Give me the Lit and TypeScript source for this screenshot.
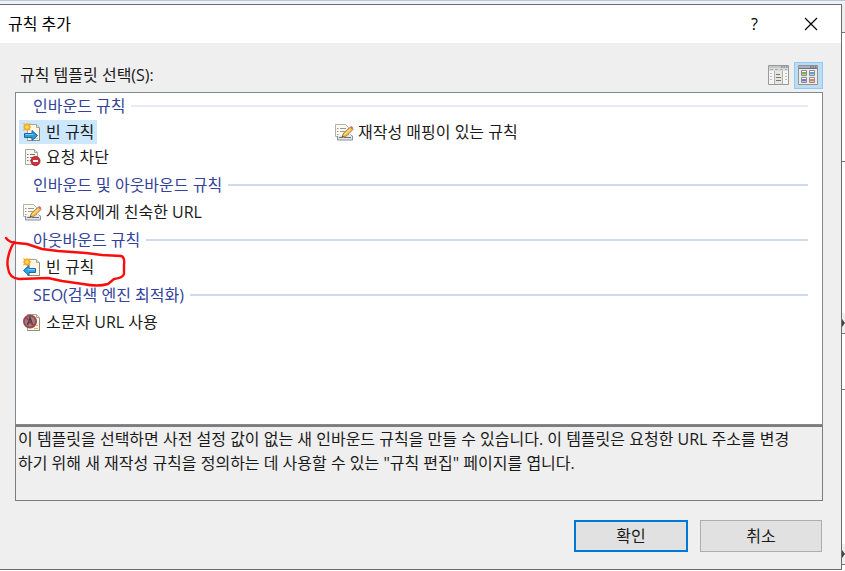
import { LitElement, html, css, svg, nothing } from "lit";
import { customElement, property, state } from "lit/decorators.js";
import { classMap } from "lit/directives/class-map.js";

type IconName = "inbound" | "block" | "rewrite" | "outbound" | "lowercase";

interface Template {
  id: string;
  label: string;
  icon: IconName;
  circled?: boolean;
}

interface Group {
  title: string;
  items: Template[];
}

const GROUPS: Group[] = [
  {
    title: "인바운드 규칙",
    items: [
      { id: "in-blank", label: "빈 규칙", icon: "inbound" },
      { id: "in-map", label: "재작성 매핑이 있는 규칙", icon: "rewrite" },
      { id: "in-block", label: "요청 차단", icon: "block" },
    ],
  },
  {
    title: "인바운드 및 아웃바운드 규칙",
    items: [{ id: "friendly", label: "사용자에게 친숙한 URL", icon: "rewrite" }],
  },
  {
    title: "아웃바운드 규칙",
    items: [{ id: "out-blank", label: "빈 규칙", icon: "outbound", circled: true }],
  },
  {
    title: "SEO(검색 엔진 최적화)",
    items: [{ id: "lower", label: "소문자 URL 사용", icon: "lowercase" }],
  },
];

const page = svg`
  <path d="M4.5 1.5h9l3 3v13h-12z" fill="#fbf8e6" stroke="#aaa594"/>
  <path d="M13.5 1.5v3h3" fill="#e8e3c8" stroke="#aaa594"/>
  <path d="M16.5 5v12.500h-12" fill="none" stroke="#8f8d84"/>`;

const star = svg`
  <path d="M0 0l2.500 1L4 0l1.200 1L7.500 0 7 2.500 8 4 7 5.200 7.500 7.500 5 7 4 8 3 7 0 7.500 1 5 0 4 1 2.500z" fill="#f7a928"/>
  <circle cx="4" cy="4" r="1.800" fill="#ffd765"/>`;

const ICONS = {
  inbound: svg`${page}
    <path d="M7 15.500h8" stroke="#c9c6b6"/>
    ${star}
    <path d="M1.500 10.500h7.500v-3l5.500 5-5.500 5v-3h-7.500z" fill="#2a9be0" stroke="#1769a6"/>
    <path d="M2.500 11.500h7.500" stroke="#7fcdf5"/>`,
  outbound: svg`${page}${star}
    <path d="M12.500 10.500h-6.500v-3l-5.500 5 5.500 5v-3h6.500z" fill="#2fa5e8" stroke="#1769a6"/>
    <path d="M5 11.500h7" stroke="#8ad4f8"/>`,
  block: svg`
    <path d="M2.500 1.500h9l3 3v12h-12z" fill="#f8f7f2" stroke="#a5a5a0"/>
    <path d="M11.500 1.500v3h3" fill="#deded8" stroke="#a5a5a0"/>
    <path d="M4 6.500h1.500M7 6.500h5M4 9.500h1.500M7 9.500h4M4 12.500h1.500M7 12.500h2" stroke="#777"/>
    <circle cx="12.500" cy="13" r="4.500" fill="#d5323c" stroke="#a32028"/>
    <path d="M10 13h5" stroke="#fff" stroke-width="2"/>`,
  rewrite: svg`
    <path d="M.5 1.500h10l3 3v9h-13z" fill="#fbfaf0" stroke="#b3b0a5"/>
    <path d="M2 5.500h1.500M5 5.500h6M2 8.500h1.500M5 8.500h5M2 11.500h1.500" stroke="#999"/>
    <path d="M2.500 13v4h15v-4l-2-1.500" fill="#e2e5e9" stroke="#8a929e"/>
    <path d="M4 14.500h3M9 14.500h7" stroke="#6a727e"/>
    <path d="M7 14.500l1.500-4.500 7-6 2.500 2.500-6.500 6.500z" fill="#f5be4b" stroke="#96702c" stroke-width=".8"/>
    <path d="M9.500 11.500l6-5.500" stroke="#fff0b8"/>
    <path d="M15 4.300l1.500-1.300 2 2-1.300 1.600z" fill="#dd6a6a"/>
    <path d="M7 14.500l.6-2 1.200 1.200z" fill="#333"/>`,
  lowercase: svg`${page}
    <path d="M11 15.500h4M13 12.500h2" stroke="#d9b86a"/>
    <circle cx="7" cy="8.500" r="6" fill="#9a8287" stroke="#a0484c" stroke-width="2"/>
    <path d="M4.500 12l2.500-7.500 2.500 7.500M5.500 9.500h3" fill="none" stroke="#443e49" stroke-width="1.500"/>
    <path d="M3 4.500l8 8" stroke="#a8383d" stroke-width="1.500"/>`,
};

@customElement("rule-item")
export class RuleItem extends LitElement {
  @property({ attribute: false }) item!: Template;
  @property({ type: Boolean }) selected = false;

  static styles = css`
    :host {
      display: block;
      position: relative;
    }
    .item {
      display: inline-flex;
      align-items: center;
      gap: 4px;
      height: 24px;
      padding: 0 3px 0 4px;
      border: 0;
      background: none;
      color: #1a1a1a;
      font: inherit;
      white-space: nowrap;
    }
    .item.selected {
      background: #cce8ff;
    }
    .icon {
      flex: none;
      width: 19px;
      height: 19px;
    }
    .mark {
      position: absolute;
      left: -16px;
      top: -19px;
      width: 124px;
      height: 52px;
      pointer-events: none;
    }
  `;

  render() {
    return html`
      <button
        class=${classMap({ item: true, selected: this.selected })}
        type="button"
        aria-pressed=${this.selected}
      >
        <svg class="icon" viewBox="0 0 19 19" aria-hidden="true">${ICONS[this.item.icon]}</svg>
        <span>${this.item.label}</span>
      </button>
      ${this.item.circled
        ? html`<svg class="mark" viewBox="0 0 124 52" aria-hidden="true">
            <path
              d="M3 2C6 6 9 7 14 7L24 8 39 13 55 15 83 17 99 19 118 20Q122 21 121 29L121 38Q120 42 111 43L105 48Q95 51 80 48L59 45 45 42 16 43Q6 42 5 32Q3 24 8 12L11 6"
              fill="none" stroke="#fb0d0d" stroke-width="2.400" stroke-linecap="round" stroke-linejoin="round"
            />
          </svg>`
        : nothing}
    `;
  }
}

@customElement("app-root")
export class AppRoot extends LitElement {
  @state() private selected = "in-blank";

  static styles = css`
    :host {
      display: flex;
      flex-direction: column;
      min-height: 100vh;
      box-sizing: border-box;
      padding-bottom: 1px;
      background: #fff;
      color: #1a1a1a;
      font: 16px/24px "Open Sans", "Noto Sans CJK KR", sans-serif;
    }
    .strip {
      height: 1px;
      background: #b9c7d6;
      border-bottom: 3px solid #eef3f8;
    }
    .main {
      flex: 1;
      display: flex;
    }
    .dialog {
      flex: 1;
      display: flex;
      flex-direction: column;
      border: 1px solid #6b6b6b;
      border-left: 0;
      background: #efefef;
    }
    .titlebar {
      display: flex;
      align-items: center;
      gap: 5px;
      height: 38px;
      padding: 0 8px;
      background: #fff;
      color: #000;
    }
    h1 {
      flex: 1;
      margin: 0;
      font-size: 16px;
      font-weight: 400;
    }
    .caption {
      display: grid;
      place-items: center;
      width: 57px;
      height: 38px;
      padding: 0;
      border: 0;
      background: none;
      color: #000;
      font: inherit;
    }
    .caption:last-child {
      width: 45px;
    }
    .content {
      flex: 1;
      display: flex;
      flex-direction: column;
      padding: 18px 18px 17px 15px;
    }
    .toolbar {
      display: flex;
      align-items: center;
      gap: 1px;
      height: 28px;
      padding: 0 0 3px 5px;
    }
    .label {
      flex: 1;
    }
    .view {
      display: grid;
      place-items: center;
      width: 29px;
      height: 27px;
      padding: 0;
      border: 1px solid transparent;
      background: none;
    }
    .view.on {
      border-color: #90c8f6;
      background: #bcdcf4;
    }
    .view svg {
      width: 21px;
      height: 20px;
    }
    .list {
      flex: 1;
      border: 1px solid #828790;
      background: #fff;
      padding: 0 3px;
    }
    .group h2 {
      display: flex;
      align-items: center;
      gap: 6px;
      height: 30px;
      margin: 0;
      padding: 0 11px 0 14px;
      color: #33429a;
      font-size: 16px;
      font-weight: 400;
    }
    .group:first-child h2 {
      height: 25px;
      padding-bottom: 2px;
    }
    .group h2::after {
      content: "";
      flex: 1;
      height: 2px;
      background: #d0daee;
    }
    .group:first-child h2::after {
      background: #e6eaf7;
    }
    .items {
      display: grid;
      grid-template-columns: 39% 39%;
      row-gap: 1px;
      margin: 0;
      padding: 0 0 1px;
      list-style: none;
    }
    .items li {
      height: 24px;
    }
    .description {
      box-sizing: border-box;
      min-height: 76px;
      margin: 0;
      padding: 0 2px;
      border: 1px solid #7d7d7d;
      border-top-width: 2px;
    }
    .footer {
      display: flex;
      justify-content: flex-end;
      gap: 12px;
      padding: 19px 1px 0 0;
    }
    .btn {
      width: 122px;
      height: 32px;
      padding: 0;
      border: 1px solid #adadad;
      background: #e1e1e1;
      color: #1a1a1a;
      font: inherit;
    }
    .btn.primary {
      width: 114px;
      border: 2px solid #0078d7;
    }
    .behind {
      display: grid;
      grid-template-rows: 29fr 128fr 171fr 56fr 174fr 5fr;
      width: 3px;
      overflow: hidden;
    }
    .behind div {
      display: flex;
      align-items: flex-end;
      border-bottom: 1px solid #777;
    }
    .behind div:first-child {
      background: #eee;
    }
    .behind div:last-child {
      border: 0;
    }
    .behind svg {
      width: 3px;
      height: 20px;
      background: #eee;
    }
  `;

  private arrow = html`<svg viewBox="0 0 3 20" aria-hidden="true">
    <path d="M0 6l3 4-3 4z" fill="#444" />
  </svg>`;

  render() {
    return html`
      <div class="strip"></div>
      <div class="main">
        <section class="dialog" role="dialog" aria-labelledby="title">
          <header class="titlebar">
            <h1 id="title">규칙 추가</h1>
            <button class="caption" type="button" aria-label="도움말">?</button>
            <button class="caption" type="button" aria-label="닫기">
              <svg width="14" height="14" viewBox="0 0 14 14">
                <path d="M1 1l12 12M13 1L1 13" stroke="#000" stroke-width="1.200" />
              </svg>
            </button>
          </header>
          <div class="content">
            <div class="toolbar">
              <span class="label" id="pick">규칙 템플릿 선택(S):</span>
              <button class="view" type="button" aria-label="자세히">
                <svg viewBox="0 0 21 20">
                  <path d="M.5.5h20v19h-20z" fill="#f5f5f3" stroke="#999" />
                  <path d="M1 1h19v2H1z" fill="#c2c5cc" />
                  <path d="M13 2h1.500M15.500 2H17M18 2h1.500" stroke="#5b6b8c" />
                  <path d="M1 3h19v3H1z" fill="#ddddda" />
                  <path d="M2 4.500h3M7 4.500h3M12 4.500h3M17 4.500h2" stroke="#aaa" />
                  <path d="M6.500 6v13M14.500 6v13" stroke="#b0b0aa" />
                  <path d="M7 6h7v13H7z" fill="#e6e6df" />
                  <path d="M8 9.500h4M8 12.500h5M8 15.500h5" stroke="#777" />
                  <path d="M2 8.500h2M2 11.500h2M2 14.500h2M17 8.500h2M17 11.500h2M17 14.500h2" stroke="#b5bcc8" />
                </svg>
              </button>
              <button class="view on" type="button" aria-label="아이콘" aria-pressed="true">
                <svg viewBox="0 0 21 20">
                  <path d="M.5.5h19v19H.5z" fill="#ececea" stroke="#929292" />
                  <path d="M1 1h18v3H1z" fill="#aab0bf" />
                  <path d="M1 3.500h18" stroke="#69728c" />
                  <path d="M12 2h1.500M14.500 2H16M17 2h1.500" stroke="#41506f" />
                  <path d="M3.500 5.500h5v5h-5zM11.500 5.500h5v5h-5zM3.500 12.500h5v5h-5zM11.500 12.500h5v5h-5z" fill="#fff" stroke="#8c8c8c" />
                  <path d="M4 7h4v2.500H4z" fill="#83ab45" />
                  <path d="M12 7h4v2.500h-4z" fill="#55a4d2" />
                  <path d="M4 14h4v2.500H4z" fill="#7777cf" />
                  <path d="M12 14h4v2.500h-4z" fill="#df8060" />
                </svg>
              </button>
            </div>
            <div class="list" role="group" aria-labelledby="pick">
              ${GROUPS.map(
                (group) => html`<section class="group">
                  <h2>${group.title}</h2>
                  <ul class="items">
                    ${group.items.map(
                      (item) => html`<li>
                        <rule-item
                          .item=${item}
                          ?selected=${item.id === this.selected}
                          @click=${() => (this.selected = item.id)}
                        ></rule-item>
                      </li>`,
                    )}
                  </ul>
                </section>`,
              )}
            </div>
            <p class="description">
              이 템플릿을 선택하면 사전 설정 값이 없는 새 인바운드 규칙을 만들 수 있습니다. 이 템플릿은 요청한 URL 주소를 변경<br />하기 위해 새 재작성 규칙을 정의하는 데 사용할 수 있는 "규칙 편집" 페이지를 엽니다.
            </p>
            <div class="footer">
              <button class="btn primary" type="button">확인</button>
              <button class="btn" type="button">취소</button>
            </div>
          </div>
        </section>
        <div class="behind" aria-hidden="true">
          <div></div>
          <div></div>
          <div>${this.arrow}</div>
          <div></div>
          <div>${this.arrow}</div>
          <div></div>
        </div>
      </div>
    `;
  }
}
